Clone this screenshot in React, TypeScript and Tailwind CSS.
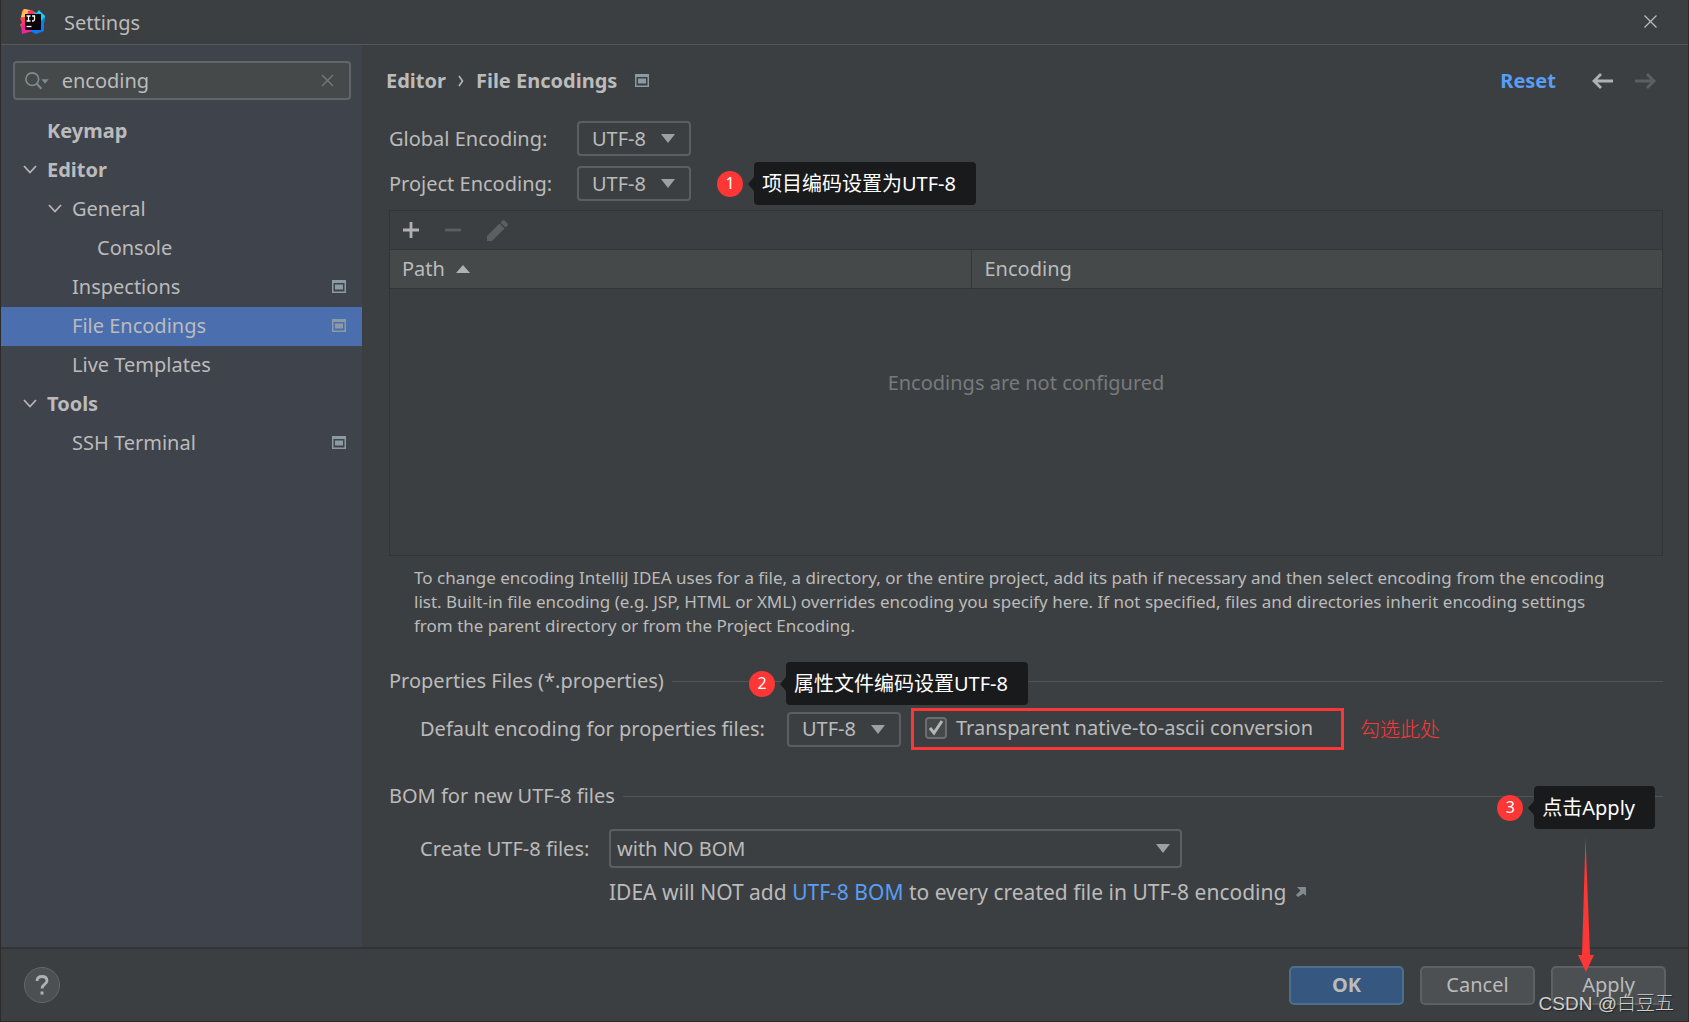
import { ReactNode, useState } from 'react';
import clsx from 'clsx';

type TreeItem = {
  label: string;
  indent: string;
  bold?: boolean;
  open?: boolean;
  project?: boolean;
};

const tree: TreeItem[] = [
  { label: 'Keymap', indent: 'pl-[46px]', bold: true },
  { label: 'Editor', indent: 'pl-[22px]', bold: true, open: true },
  { label: 'General', indent: 'pl-[47px]', open: true },
  { label: 'Console', indent: 'pl-24' },
  { label: 'Inspections', indent: 'pl-[71px]', project: true },
  { label: 'File Encodings', indent: 'pl-[71px]', project: true },
  { label: 'Live Templates', indent: 'pl-[71px]' },
  { label: 'Tools', indent: 'pl-[22px]', bold: true, open: true },
  { label: 'SSH Terminal', indent: 'pl-[71px]', project: true },
];

const Logo = () => (
  <svg width="26" height="26" viewBox="0 0 26 26" aria-hidden="true">
    <path d="M2 2 4 0l9 2-2 10L3 21l-3-5 3-3-2-4z" fill="#fd8224" />
    <path d="M4 0 10 1l-2 7H1z" fill="#fcc05a" />
    <path d="m13 2 3 2 3-3 6 6-2 15-4-14-8-2z" fill="#22b9f5" />
    <path d="M8 2 12 1l3 4-2 3H7z" fill="#fe3560" />
    <path d="m0 9 5-1v7l-2 1z" fill="#fe3d5c" />
    <path d="m1 16 5-3 7 9-11 3z" fill="#f0259b" />
    <path d="m20 5 4 3v14l-8 3-6-3 9-4z" fill="#087cfa" />
    <path d="m18 2 7 5-4 5z" fill="#12d5f8" />
    <path d="M5 5h16v16H5z" fill="#0b0508" />
    <path
      d="M6.500 7h4M6.500 12h4M8.500 7v5M12 7h2.500v3.500q0 1.500-1.500 1.500h-1"
      fill="none"
      stroke="#fff"
      strokeWidth="1.300"
    />
    <path d="M6.500 17.500h5" stroke="#fff" strokeWidth="1.300" />
  </svg>
);

const ProjectIcon = () => (
  <svg width="14" height="14" viewBox="0 0 14 14" className="shrink-0" aria-hidden="true">
    <path d="M0 0h14v13H0zM1.500 3v8.500h11V3z" fill="#8c9ba3" fillRule="evenodd" />
    <path d="M3 4.500h8v5H3z" fill="#8c9ba3" />
  </svg>
);

const Chevron = () => (
  <svg width="14" height="9" viewBox="0 0 14 9" className="shrink-0" aria-hidden="true">
    <path d="m1 1 6 6.500L13 1" fill="none" stroke="#b4b6b8" strokeWidth="1.800" />
  </svg>
);

type ComboProps = {
  id: string;
  value: string;
  wide?: boolean;
};

const Combo = ({ id, value, wide }: ComboProps) => (
  <div className="relative w-fit">
    <select
      id={id}
      className={clsx(
        'block appearance-none rounded-sm border-2 border-[#5c5f61] bg-transparent outline-none',
        wide ? 'h-[39px] w-[573px] pl-1.5' : 'h-[35px] w-[114px] pl-[13px]',
      )}
    >
      <option>{value}</option>
    </select>
    <svg
      width="14"
      height="9"
      viewBox="0 0 14 9"
      className={clsx('pointer-events-none absolute inset-y-0 my-auto', wide ? 'right-3' : 'right-4')}
      aria-hidden="true"
    >
      <path d="M0 0h14L7 9z" fill="#9da0a2" />
    </svg>
  </div>
);

type CalloutProps = { step: number; className: string; children: ReactNode };

const Callout = ({ step, className, children }: CalloutProps) => (
  <div className={clsx('absolute z-10 flex items-center whitespace-nowrap', className)}>
    <span className="flex size-[26px] items-center justify-center rounded-full bg-[#fd3636] pb-0.5 text-base leading-none text-white">
      {step}
    </span>
    <span className="ml-[5px] border-y-[7px] border-r-[6px] border-y-transparent border-r-[#191a1c]" />
    <span className="flex h-[43px] items-center rounded-sm bg-[#191a1c] pr-5 pl-2 text-xl text-white">
      {children}
    </span>
  </div>
);

const SectionTitle = ({ children }: { children: ReactNode }) => (
  <div className="flex items-center gap-2">
    <h2>{children}</h2>
    <div className="h-px grow bg-[#515456]" />
  </div>
);

const Sidebar = () => {
  const [selected, setSelected] = useState('File Encodings');
  const [query, setQuery] = useState('encoding');

  return (
    <aside className="w-[361px] shrink-0 bg-[#3f434c] pt-4">
      <div className="mr-[11px] ml-3 flex h-[39px] items-center rounded-sm border-2 border-[#62656a] bg-[#45494a] px-2.5">
        <svg width="26" height="20" viewBox="0 0 26 20" aria-hidden="true">
          <circle cx="8" cy="8" r="7" fill="none" stroke="#7f8b91" strokeWidth="1.800" />
          <path d="m13 13 5 5.500" stroke="#7f8b91" strokeWidth="2.200" />
          <path d="M18 8h8l-4 5z" fill="#7f8b91" />
        </svg>
        <input
          aria-label="Search settings"
          value={query}
          onChange={(e) => setQuery(e.target.value)}
          className="ml-[13px] min-w-0 grow bg-transparent outline-none"
        />
        <button aria-label="Clear search" className="mr-[5px]" onClick={() => setQuery('')}>
          <svg width="13" height="13" viewBox="0 0 13 13">
            <path d="m1 1 11 11M12 1 1 12" stroke="#70777b" strokeWidth="1.500" />
          </svg>
        </button>
      </div>
      <ul className="mt-3">
        {tree.map((item) => (
          <li key={item.label}>
            <button
              onClick={() => setSelected(item.label)}
              className={clsx(
                'flex h-[39px] w-full items-center gap-2.5 pr-4 pb-0.5 text-left',
                item.indent,
                item.bold && 'font-bold',
                selected === item.label && 'bg-[#4b6eaf]',
              )}
            >
              {item.open && <Chevron />}
              <span className="grow">{item.label}</span>
              {item.project && <ProjectIcon />}
            </button>
          </li>
        ))}
      </ul>
    </aside>
  );
};

const EncodingTable = () => (
  <div className="mt-[9px] flex h-[346px] flex-col border border-[#323435]">
    <div className="flex h-[39px] items-center border-b border-[#323435] pl-[13px]">
      <button aria-label="Add">
        <svg width="16" height="16" viewBox="0 0 16 16">
          <path d="M0 8h16M8 0v16" stroke="#afb1b3" strokeWidth="2.800" />
        </svg>
      </button>
      <button aria-label="Remove" className="ml-[26px]" disabled>
        <svg width="16" height="16" viewBox="0 0 16 16">
          <path d="M0 8h16" stroke="#5c5e60" strokeWidth="2.800" />
        </svg>
      </button>
      <button aria-label="Edit" className="ml-[26px]" disabled>
        <svg width="21" height="21" viewBox="0 0 21 21">
          <path d="M0 16 12.500 3.500l5 5L5 21H0z" fill="#5c5e60" />
          <path d="m13.500 2.500 2-2q1-.8 2 0l3 3q.8 1 0 2l-2 2z" fill="#5c5e60" />
        </svg>
      </button>
    </div>
    <table className="w-full grow table-fixed border-collapse">
      <thead>
        <tr className="h-[38px] border-b border-[#323435] bg-[#45494a] text-left">
          <th className="w-[581px] border-r border-[#36393a] pl-3 font-normal">
            <span className="flex items-center gap-[11px]">
              Path
              <svg width="14" height="8" viewBox="0 0 14 8" aria-hidden="true">
                <path d="M0 8h14L7 0z" fill="#afb1b3" />
              </svg>
            </span>
          </th>
          <th className="pl-[13px] font-normal">Encoding</th>
        </tr>
      </thead>
      <tbody>
        <tr>
          <td colSpan={2} className="pb-[77px] text-center text-[#777a7c]">
            Encodings are not configured
          </td>
        </tr>
      </tbody>
    </table>
  </div>
);

const FileEncodings = () => (
  <main className="relative min-w-0 grow pr-[25px] pl-[27px]">
    <div className="mb-1 -ml-[3px] flex h-[72px] items-center font-bold">
      <span>Editor</span>
      <svg width="6" height="12" viewBox="0 0 6 12" className="mx-3" aria-hidden="true">
        <path d="m1 1 3.500 5L1 11" fill="none" stroke="#bbb" strokeWidth="1.500" />
      </svg>
      <h1 className="mr-[18px]">File Encodings</h1>
      <ProjectIcon />
      <button className="mr-9 ml-auto text-[#589df6]">Reset</button>
      <button aria-label="Back" className="mr-[22px]">
        <svg width="21" height="16" viewBox="0 0 21 16">
          <path d="M21 8H2M9 1 2 8l7 7" fill="none" stroke="#afb1b3" strokeWidth="2.800" />
        </svg>
      </button>
      <button aria-label="Forward" className="mr-[7px]" disabled>
        <svg width="21" height="16" viewBox="0 0 21 16">
          <path d="M0 8h19M12 1l7 7-7 7" fill="none" stroke="#5c5e60" strokeWidth="2.800" />
        </svg>
      </button>
    </div>

    <div className="grid grid-cols-[188px_1fr] items-center gap-y-2.5">
      <label htmlFor="global">Global Encoding:</label>
      <Combo id="global" value="UTF-8" />
      <label htmlFor="project">Project Encoding:</label>
      <div className="relative">
        <Combo id="project" value="UTF-8" />
        <Callout step={1} className="-top-1 left-[140px]">
          项目编码设置为UTF-8
        </Callout>
      </div>
    </div>

    <EncodingTable />

    <p className="mt-2.5 pr-13 pl-[25px] text-[17px] leading-6">
      To change encoding IntelliJ IDEA uses for a file, a directory, or the entire project, add its
      path if necessary and then select encoding from the encoding list. Built-in file encoding
      (e.g. JSP, HTML or XML) overrides encoding you specify here. If not specified, files and
      directories inherit encoding settings from the parent directory or from the Project Encoding.
    </p>

    <section className="relative mt-[29px]">
      <SectionTitle>Properties Files (*.properties)</SectionTitle>
      <Callout step={2} className="-top-[5px] left-[360px]">
        属性文件编码设置UTF-8
      </Callout>
      <div className="mt-[13px] flex items-center pl-[31px]">
        <label htmlFor="properties" className="w-[367px]">
          Default encoding for properties files:
        </label>
        <Combo id="properties" value="UTF-8" />
        <label className="ml-2.5 flex h-[42px] w-[433px] items-center border-3 border-[#fd3636] pb-0.5 pl-[11px]">
          <span className="relative mr-[9px] flex">
            <input
              type="checkbox"
              defaultChecked
              className="peer size-[22px] appearance-none rounded-sm border-2 border-[#6b6e70] bg-[#45494a]"
            />
            <svg
              width="22"
              height="22"
              viewBox="0 0 22 22"
              className="pointer-events-none absolute inset-0 hidden peer-checked:block"
              aria-hidden="true"
            >
              <path d="m5 11 4 5L17 4" fill="none" stroke="#b4b6b8" strokeWidth="3" />
            </svg>
          </span>
          Transparent native-to-ascii conversion
        </label>
        <span className="ml-4 font-['Noto_Sans_CJK_SC',sans-serif] font-light text-[#fd3636]">
          勾选此处
        </span>
      </div>
    </section>

    <section className="relative mt-8">
      <SectionTitle>BOM for new UTF-8 files</SectionTitle>
      <Callout step={3} className="top-1 right-2">
        点击Apply
      </Callout>
      <div className="mt-[19px] grid grid-cols-[189px_1fr] items-center gap-y-2.5 pl-[31px]">
        <label htmlFor="bom">Create UTF-8 files:</label>
        <Combo id="bom" value="with NO BOM" wide />
        <p className="col-start-2 flex items-center gap-2.5 text-[21px]">
          <span>
            IDEA will NOT add{' '}
            <a href="#bom" className="text-[#589df6]">
              UTF-8 BOM
            </a>{' '}
            to every created file in UTF-8 encoding
          </span>
          <svg width="10" height="10" viewBox="0 0 10 10" aria-hidden="true">
            <path d="M1 0h9v9L7.500 6.500 2 10 0 8l4.500-4.500z" fill="#7f8b91" />
          </svg>
        </p>
      </div>
    </section>

    {/* arrow that leads from step 3 to the Apply button */}
    <svg
      width="16"
      height="135"
      viewBox="0 0 16 135"
      className="absolute right-[94px] -bottom-[25px] z-10"
      aria-hidden="true"
    >
      <path d="M7.500 0 12 118h4L8 135 0 118h4z" fill="#fd3636" />
    </svg>
  </main>
);

const dialogButton = 'h-[39px] w-[115px] rounded-[5px] border-2';

export default function App() {
  return (
    <div className="flex min-h-screen flex-col border-x border-b border-[#2b2b2b] bg-[#3c3f41] font-['Noto_Sans','Noto_Sans_CJK_SC',sans-serif] text-xl leading-7 text-[#bbbbbb]">
      <header className="flex h-[45px] items-center border-b border-[#555759] pl-[19px]">
        <Logo />
        <span className="ml-[18px] pt-0.5">Settings</span>
        <button aria-label="Close" className="mr-[31px] ml-auto pb-0.5">
          <svg width="13" height="13" viewBox="0 0 13 13">
            <path d="m.5.5 12 12M12.500.5l-12 12" stroke="#bbb" strokeWidth="1.300" />
          </svg>
        </button>
      </header>
      <div className="flex grow">
        <Sidebar />
        <FileEncodings />
      </div>
      <footer className="relative flex h-[74px] items-center gap-4 border-t-2 border-[#323435] pr-[22px] pl-[23px]">
        <button
          aria-label="Help"
          className="mr-auto flex size-9 items-center justify-center rounded-full border border-[#65686a] bg-[#4c5052]"
        >
          <svg width="14" height="20" viewBox="0 0 14 20">
            <path
              d="M2 6q0-4.500 5-4.500t5 4.500c0 3-5 3.500-5 7.500"
              fill="none"
              stroke="#afb1b3"
              strokeWidth="2.800"
            />
            <path d="M5.500 16.500h3v3h-3z" fill="#afb1b3" />
          </svg>
        </button>
        <button className={clsx(dialogButton, 'border-[#4c708c] bg-[#365880] font-bold')}>OK</button>
        <button className={clsx(dialogButton, 'border-[#5e6163] bg-[#4c5052]')}>Cancel</button>
        <button className={clsx(dialogButton, 'border-[#5e6163] bg-[#4c5052]')}>Apply</button>
        <span className="pointer-events-none absolute right-3.5 bottom-[3px] font-['Liberation_Sans','Noto_Sans_CJK_SC',sans-serif] text-[19px] font-light text-[#d0d0d0] [text-shadow:1px_1px_1px_#222]">
          CSDN @白豆五
        </span>
      </footer>
    </div>
  );
}
